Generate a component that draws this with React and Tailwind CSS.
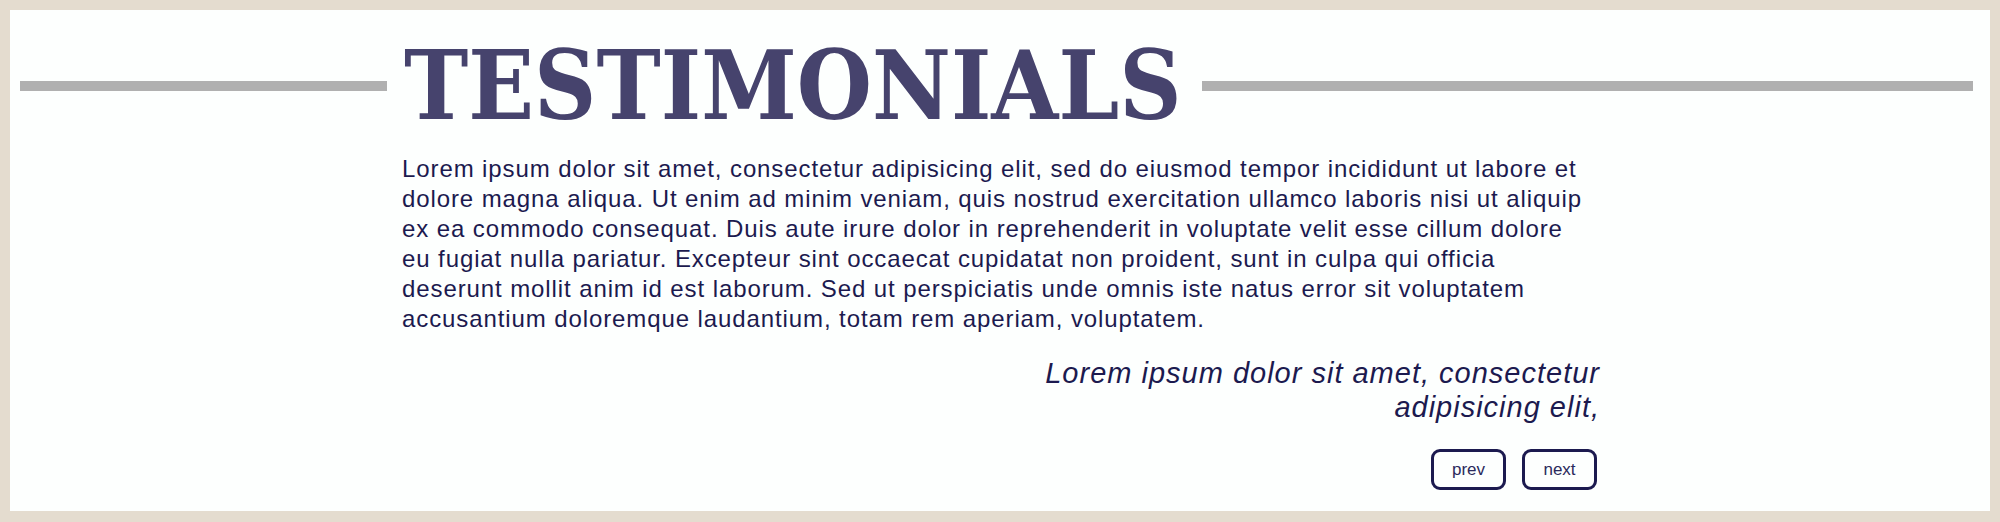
import { useState } from "react";

const quotes = [
  "Lorem ipsum dolor sit amet, consectetur adipisicing elit,",
  "Sed ut perspiciatis unde omnis iste natus error sit voluptatem,",
];

const Testimonials = () => {
  const [index, setIndex] = useState(0);

  const prev = () => setIndex((i) => (i - 1 + quotes.length) % quotes.length);
  const next = () => setIndex((i) => (i + 1) % quotes.length);

  return (
    <div className="min-h-screen bg-[#e4dccf] p-[10px] pb-[11px]">
      <div className="h-[501px] bg-[#fdfffe] pt-[23px]">
        {/* Heading with rules on both sides */}
        <div className="flex items-center">
          <div className="ml-[10px] h-[10px] w-[367px] bg-[#b0b0b0]" />
          <h1 className="ml-[17px] font-['DejaVu_Serif_Condensed','DejaVu_Serif',serif] text-[96px] font-bold font-stretch-condensed leading-[106px] text-[#46436d]">
            TESTIMONIALS
          </h1>
          <div className="ml-[20px] mr-[17px] h-[10px] flex-1 bg-[#b0b0b0]" />
        </div>

        <div className="ml-[392px] w-[1198px] font-['Liberation_Sans',Arial,sans-serif] text-[#1c1a4f]">
          <p className="mt-[15px] pr-[8px] text-[24px] leading-[30px] tracking-[0.9px]">
            Lorem ipsum dolor sit amet, consectetur adipisicing elit, sed do
            eiusmod tempor incididunt ut labore et dolore magna aliqua. Ut enim
            ad minim veniam, quis nostrud exercitation ullamco laboris nisi ut
            aliquip ex ea commodo consequat. Duis aute irure dolor in
            reprehenderit in voluptate velit esse cillum dolore eu fugiat nulla
            pariatur. Excepteur sint occaecat cupidatat non proident, sunt in
            culpa qui officia deserunt mollit anim id est laborum. Sed ut
            perspiciatis unde omnis iste natus error sit voluptatem accusantium
            doloremque laudantium, totam rem aperiam, voluptatem.
          </p>

          {/* Quote author line */}
          <div className="mt-[22px] flex justify-end">
            <p className="max-w-[620px] text-right text-[29px] italic leading-[34px] tracking-[1px]">
              {quotes[index]}
            </p>
          </div>

          <div className="mr-[3px] mt-[25px] flex justify-end gap-4">
            <button
              onClick={prev}
              className="h-[41px] w-[75px] rounded-[9px] border-[3px] border-[#1c1a4f] text-[17px] text-[#2b2a5c]"
            >
              prev
            </button>
            <button
              onClick={next}
              className="h-[41px] w-[75px] rounded-[9px] border-[3px] border-[#1c1a4f] text-[17px] text-[#2b2a5c]"
            >
              next
            </button>
          </div>
        </div>
      </div>
    </div>
  );
};

export default function App() {
  return <Testimonials />;
}
